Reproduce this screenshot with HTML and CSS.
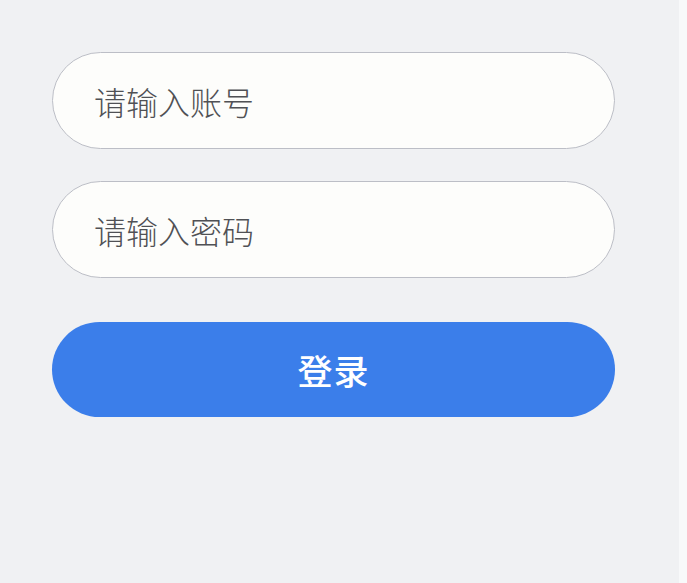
FILE: index.html
```html
<!DOCTYPE html>
<html lang="zh">
<head>
<meta charset="utf-8">
<link rel="stylesheet" href="styles.css">
</head>
<body>
<div class="page">
  <form class="login">
    <div class="field"><input class="input" type="text" placeholder="请输入账号"></div>
    <div class="field"><input class="input" type="password" placeholder="请输入密码"></div>
    <button class="btn" type="button">登录</button>
  </form>
  <div class="edge"></div>
</div>
</body>
</html>
```
FILE: styles.css
```css
html, body {
  margin: 0;
  padding: 0;
  height: 100%;
}
body {
  background: #f0f1f3;
  font-family: "Noto Sans CJK SC", "Noto Sans", sans-serif;
}
.page {
  display: flex;
  height: 583px;
}
.login {
  flex: none;
  width: 563px;
  padding: 52px 0 0 52px;
  display: flex;
  flex-direction: column;
}
.field {
  margin-bottom: 32px;
}
.input {
  box-sizing: border-box;
  width: 563px;
  height: 97px;
  border: 1.5px solid #bcbec6;
  border-radius: 49px;
  background: #fdfdfb;
  padding: 0 0 0 41px;
  font-family: inherit;
  font-size: 32px;
  font-weight: 300;
  color: #444;
  outline: none;
}
.input::placeholder {
  color: #505155;
}
.btn {
  margin-top: 12px;
  box-sizing: border-box;
  width: 563px;
  height: 95px;
  border: none;
  border-radius: 48px;
  background: #3b7eea;
  color: #fff;
  font-family: inherit;
  font-size: 35px;
  font-weight: 500;
  letter-spacing: 1px;
}
.edge {
  margin-left: auto;
  width: 8px;
  background: #f8f9fa;
}
```
